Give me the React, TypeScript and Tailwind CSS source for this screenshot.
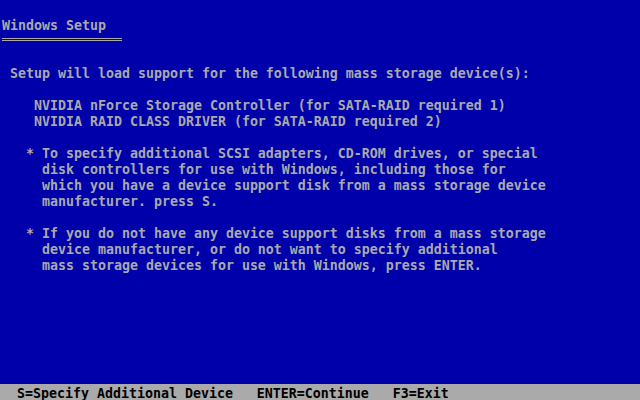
import React from 'react';

const lines: string[] = [
  '',
  'Windows Setup',
  '__RULE__',
  '',
  ' Setup will load support for the following mass storage device(s):',
  '',
  '    NVIDIA nForce Storage Controller (for SATA-RAID required 1)',
  '    NVIDIA RAID CLASS DRIVER (for SATA-RAID required 2)',
  '',
  '   * To specify additional SCSI adapters, CD-ROM drives, or special',
  '     disk controllers for use with Windows, including those for',
  '     which you have a device support disk from a mass storage device',
  '     manufacturer. press S.',
  '',
  '   * If you do not have any device support disks from a mass storage',
  '     device manufacturer, or do not want to specify additional',
  '     mass storage devices for use with Windows, press ENTER.',
];

const App: React.FC = () => {
  return (
    <div className="w-[640px] h-[400px] bg-[#0000aa] text-[#aaaaaa] flex flex-col overflow-hidden font-['DejaVu_Sans_Mono',monospace] text-[13.29px] font-bold">
      {lines.map((line, i) =>
        line === '__RULE__' ? (
          <div key={i} className="h-4">
            <div className="ml-[2px] mt-[6px] w-[120px] h-[3px] border-y border-[#aaaaaa]" />
          </div>
        ) : (
          <div key={i} className="h-4 leading-[19px] whitespace-pre pl-[2px]">
            {line}
          </div>
        )
      )}

      {/* status bar */}
      <div className="mt-auto h-4 bg-[#aaaaaa] text-black leading-[19px] whitespace-pre pl-[1px]">
        {'  S=Specify Additional Device   ENTER=Continue   F3=Exit'}
      </div>
    </div>
  );
};

export default App;
